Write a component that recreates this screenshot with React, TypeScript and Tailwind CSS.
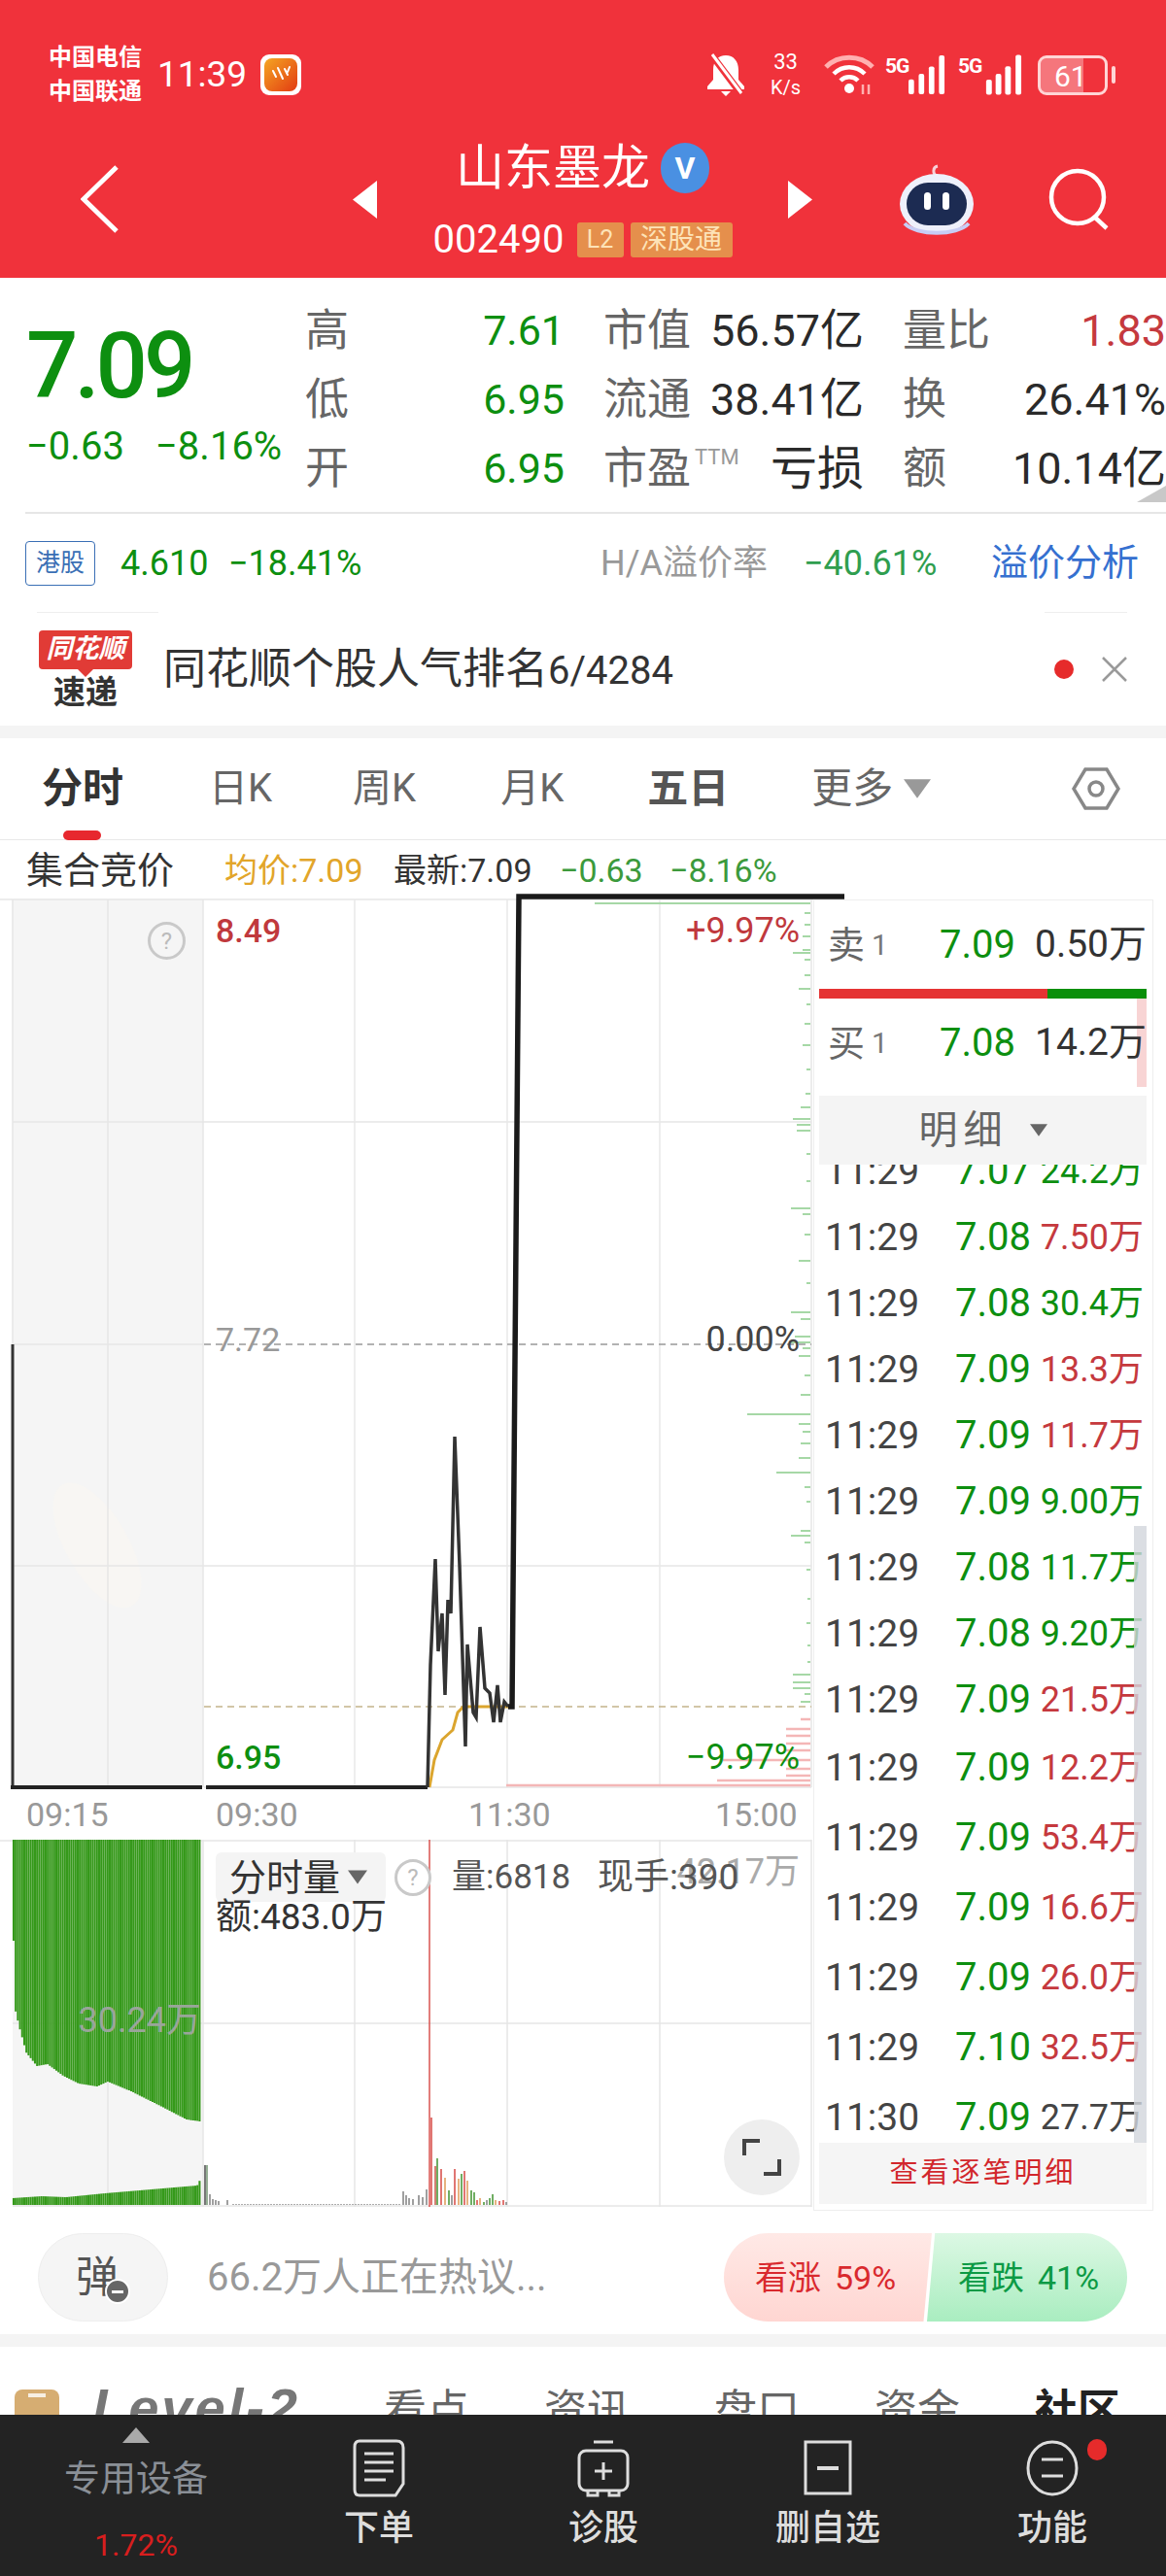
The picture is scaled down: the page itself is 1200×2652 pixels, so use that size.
import React from "react"

const SANS = "[font-family:Roboto,'Noto_Sans_CJK_SC',sans-serif]"

const trades: [string, string, string, string][] = [
  ["11:29", "7.07", "24.2万", "g"],
  ["11:29", "7.08", "7.50万", "r"],
  ["11:29", "7.08", "30.4万", "g"],
  ["11:29", "7.09", "13.3万", "r"],
  ["11:29", "7.09", "11.7万", "r"],
  ["11:29", "7.09", "9.00万", "g"],
  ["11:29", "7.08", "11.7万", "g"],
  ["11:29", "7.08", "9.20万", "g"],
  ["11:29", "7.09", "21.5万", "r"],
  ["11:29", "7.09", "12.2万", "r"],
  ["11:29", "7.09", "53.4万", "r"],
  ["11:29", "7.09", "16.6万", "r"],
  ["11:29", "7.09", "26.0万", "r"],
  ["11:29", "7.10", "32.5万", "r"],
  ["11:30", "7.09", "27.7万", "d"],
]

const pricePts =
  "440,914 443,788 448,679 451,774 455,735 458,819 461,721 464,735 468,553 473,686 479,872 481,767 487,837 490,842 494,749 499,812 504,817 508,847 512,809 515,847 519,826 523,831"
const avgPts = "442,914 447,886 455,865 466,855 471,837 477,831 523,831"

const greenTicks = [
  [4, 222], [14, 6], [26, 6], [38, 8], [52, 8], [55, 18], [62, 6], [78, 6], [92, 12], [108, 4], [128, 6], [150, 8], [175, 4],
  [200, 5], [214, 10], [226, 18], [232, 14], [238, 14], [262, 4], [290, 4], [318, 20], [324, 8], [345, 6], [372, 12], [395, 4],
  [425, 20], [432, 10], [450, 16], [456, 22], [462, 8], [470, 12], [490, 6], [510, 10], [530, 65], [540, 12], [548, 8], [560, 10],
  [575, 12], [590, 35], [605, 6], [620, 4], [650, 10], [655, 20], [662, 6], [690, 4], [720, 3], [745, 4], [768, 3], [785, 3],
  [798, 18], [806, 18], [812, 18], [818, 6], [826, 10],
]
const pinkTicks = [[844, 10], [854, 25], [861, 25], [869, 25], [876, 25], [886, 90], [895, 25], [902, 25], [907, 96], [912, 313]]

// depth of the left auction bars, read off the reference
const topCurve = [[13, 68], [16, 176], [20, 193], [27, 219], [38, 233], [49, 231], [65, 243], [81, 251], [100, 254], [111, 249], [135, 259], [163, 273], [192, 288], [206, 290]]
const lowCurve = [[13, 369], [43, 367], [68, 368], [108, 364], [203, 356], [206, 350]]

const lerp = (c: number[][], x: number) => {
  for (let i = 1; i < c.length; i++) {
    if (x <= c[i][0]) {
      const t = (x - c[i - 1][0]) / (c[i][0] - c[i - 1][0])
      return c[i - 1][1] + t * (c[i][1] - c[i - 1][1])
    }
  }
  return c[c.length - 1][1]
}

const auctionX: number[] = []
for (let x = 14; x < 207; x += 2.2) auctionX.push(x)

const volBars: [number, number, string][] = [
  [211, 335, "#555"], [213, 335, "#7a9a7a"], [216, 365, "#888"], [219, 370, "#888"], [222, 371, "#888"], [225, 372, "#888"], [234, 371, "#888"],
  [415, 362, "#888"], [418, 366, "#888"], [421, 369, "#888"], [425, 370, "#888"], [431, 366, "#888"], [435, 368, "#888"], [439, 360, "#888"],
  [444, 286, "#d9534f"], [448, 336, "#c9604f"], [450, 328, "#4c9a3c"], [454, 339, "#d9534f"], [458, 348, "#e0a060"], [462, 361, "#4c9a3c"], [465, 366, "#888"],
  [468, 339, "#d9534f"], [472, 349, "#e0a060"], [475, 344, "#4c9a3c"], [478, 341, "#d9534f"], [481, 351, "#e0a060"], [485, 361, "#4c9a3c"], [488, 363, "#4c9a3c"],
  [491, 371, "#d9534f"], [494, 369, "#e0a060"], [498, 373, "#4c9a3c"], [501, 371, "#888"], [504, 369, "#4c9a3c"], [507, 365, "#4c9a3c"], [510, 371, "#e0a060"], [514, 372, "#d9534f"], [518, 371, "#d9534f"], [521, 373, "#888"],
]
for (let x = 240; x < 414; x += 3) volBars.push([x, 375, "#999"])

const V_LINES = [365, 522, 679]

const Tri = ({ dir, className }: { dir: "left" | "right"; className: string }) => (
  <svg viewBox="0 0 25 39" className={className} fill="#fff">
    <path d={dir === "left" ? "M25 0V39L0 19.5Z" : "M0 0V39L25 19.5Z"} />
  </svg>
)

const Down = ({ className, color }: { className: string; color: string }) => (
  <svg viewBox="0 0 20 14" className={className} fill={color}>
    <path d="M0 0H20L10 14Z" />
  </svg>
)

const Help = ({ className }: { className: string }) => (
  <div className={`flex items-center justify-center rounded-full border-[3px] border-[#c9c9c9] text-[#bbb] text-[24px] ${className}`}>?</div>
)

const StatusBar = () => (
  <div className="flex h-[58px] mt-[48px] items-center">
    <div className="ml-[50px] w-[104px] flex flex-col text-white text-[24px] font-bold leading-[35px] whitespace-nowrap">
      <span>中国电信</span>
      <span>中国联通</span>
    </div>
    <span className="ml-[8px] text-white text-[37px] w-[106px]">11:39</span>
    <svg viewBox="0 0 42 42" className="w-[42px] h-[42px]">
      <defs>
        <linearGradient id="app" x1="0" y1="0" x2="1" y2="1">
          <stop offset="0" stopColor="#f5a623" />
          <stop offset="1" stopColor="#e23b12" />
        </linearGradient>
      </defs>
      <rect width="42" height="42" rx="9" fill="#fff" />
      <rect x="4" y="4" width="34" height="34" rx="8" fill="url(#app)" />
      <path d="M13 17l3 6M18 14l5 11M25 15l3 6M30 13l-2 5" stroke="#fff" strokeWidth="2" strokeLinecap="round" />
    </svg>
    <svg viewBox="0 0 40 46" className="ml-[417px] w-[40px] h-[46px]" fill="#fff">
      <path d="M20 3c-8 0-13 6-13 15v10l-6 7v3h38v-3l-6-7V18C33 9 28 3 20 3ZM15 40h10l-5 5Z" />
      <path d="M5 2 35 42" stroke="#f0323b" strokeWidth="7" />
      <path d="M6 2 36 42" stroke="#fff" strokeWidth="3" />
    </svg>
    <div className="ml-[25px] w-[33px] flex flex-col items-center text-white leading-[26px]">
      <span className="text-[22px]">33</span>
      <span className="text-[20px]">K/s</span>
    </div>
    <svg viewBox="0 0 54 44" className="ml-[22px] w-[54px] h-[44px]" fill="none">
      <path d="M3 14C16 1 38 1 51 14" stroke="#ffb0b0" strokeWidth="5" />
      <path d="M11 21C20 12 34 12 43 21" stroke="#fff" strokeWidth="4.5" />
      <path d="M18 28C23 23 31 23 36 28" stroke="#fff" strokeWidth="4.5" />
      <circle cx="27" cy="36" r="5" fill="#fff" />
      <path d="M41 32v10M47 32v10" stroke="#ffb0b0" strokeWidth="2.5" />
    </svg>
    <div className="ml-[10px] flex h-[42px]">
      <span className="text-white text-[21px] font-bold leading-[24px] tracking-[-1px] w-[24px]">5G</span>
      <svg viewBox="0 0 40 42" className="w-[38px] h-[42px]" fill="#fff">
        <rect x="0" y="26" width="6" height="16" rx="2" />
        <rect x="11" y="20" width="6" height="22" rx="2" />
        <rect x="22" y="12" width="6" height="30" rx="2" />
        <rect x="33" y="0" width="6" height="42" rx="2" />
      </svg>
    </div>
    <div className="ml-[13px] flex h-[42px]">
      <span className="text-white text-[21px] font-bold leading-[24px] tracking-[-1px] w-[24px]">5G</span>
      <svg viewBox="0 0 44 42" className="w-[43px] h-[42px]" fill="#fff">
        <rect x="5" y="26" width="6" height="16" rx="2" />
        <rect x="15" y="20" width="6" height="22" rx="2" />
        <rect x="25" y="12" width="6" height="30" rx="2" />
        <rect x="36" y="0" width="6" height="42" rx="2" />
      </svg>
    </div>
    <div className="ml-[15px] relative flex h-[41px] w-[72px] rounded-[9px] border-[3px] border-[#ffd5d5] overflow-hidden">
      <div className="w-[44px] bg-[#ffffff55]" />
      <span className="absolute left-[14px] top-[-2px] text-white text-[30px] leading-[41px]">61</span>
    </div>
    <div className="ml-[4px] w-[4px] h-[18px] rounded-full bg-[#ffd5d5]" />
  </div>
)

const Robot = () => (
  <svg viewBox="0 0 78 74" className="w-[78px] h-[74px]">
    <path d="M40 14c-6-3-5-10 0-11" stroke="#f7d0d8" strokeWidth="3" fill="none" />
    <ellipse cx="39" cy="42" rx="38" ry="31" fill="#eef0fb" />
    <rect x="8" y="20" width="62" height="44" rx="22" fill="#1c2b52" />
    <rect x="26" y="30" width="7" height="18" rx="3.5" fill="#fff" />
    <rect x="45" y="30" width="7" height="18" rx="3.5" fill="#fff" />
    <path d="M6 62c12 13 54 13 66 0" stroke="#c7cdf5" strokeWidth="4" fill="none" />
  </svg>
)

const NavBar = () => (
  <div className="flex mt-[37px] h-[124px] items-center">
    <svg viewBox="0 0 39 70" className="ml-[83px] w-[39px] h-[70px]" fill="none">
      <path d="M37 2 3 35l34 33" stroke="#fff" strokeWidth="5" />
    </svg>
    <Tri dir="left" className="ml-[241px] w-[25px] h-[39px]" />
    <div className="w-[423px] flex flex-col items-center">
      <div className="flex h-[60px] items-center">
        <span className="text-white text-[50px] leading-none whitespace-nowrap">山东墨龙</span>
        <div className="ml-[11px] w-[50px] h-[52px] rounded-full bg-[#4a90e2] flex items-center justify-center text-white font-bold text-[32px]">V</div>
      </div>
      <div className="flex h-[40px] mt-[24px] items-center">
        <span className="text-[#fff] text-[40px] leading-none w-[148px]">002490</span>
        <span className="h-[36px] w-[48px] rounded-[3px] bg-[#e58f4c] text-[#fde3b8] text-[25px] flex items-center justify-center">L2</span>
        <span className="ml-[7px] h-[36px] w-[105px] rounded-[3px] bg-[#e58f4c] text-[#fde3b8] text-[28px] flex items-center justify-center whitespace-nowrap">深股通</span>
      </div>
    </div>
    <Tri dir="right" className="w-[25px] h-[39px]" />
    <div className="ml-[89px]">
      <Robot />
    </div>
    <svg viewBox="0 0 64 64" className="ml-[75px] w-[64px] h-[64px]" fill="none" stroke="#fff" strokeWidth="4.5">
      <circle cx="31" cy="30" r="27" />
      <path d="M48 50l13 12" />
    </svg>
  </div>
)

const StatCell = ({ label, value, color, size, extra }: { label: string; value: string; color: string; size: string; extra?: boolean }) => (
  <div className="flex items-center justify-between whitespace-nowrap">
    <span className="-ml-[6px] text-[45px] text-[#666] leading-none flex items-start">
      {label}
      {extra && <span className="ml-[4px] text-[22px] text-[#999] leading-none">TTM</span>}
    </span>
    <span className={`leading-none ${size} ${color}`}>{value}</span>
  </div>
)

const InfoPanel = () => {
  const g = "text-[#0d8f10]"
  const d = "text-[#2a2a2a]"
  const sm = "text-[43px]"
  const lg = "text-[45px]"
  return (
    <div className="bg-white h-[461px]">
      <div className="flex h-[241px] relative">
        <div className="w-[320px] pl-[27px]">
          <div className="mt-[41px] h-[100px] flex items-center text-[94px] text-[#0d8f10] font-medium leading-none tracking-[-4px]">7.09</div>
          <div className="mt-[10px] h-[46px] flex items-center text-[40px] text-[#0d8f10] leading-none whitespace-nowrap">
            <span className="w-[133px]">−0.63</span>
            <span>−8.16%</span>
          </div>
        </div>
        <div className="mt-[19px] w-[880px] grid grid-cols-[261px_262px_265px] auto-rows-[71px] [column-gap:46px]">
          <StatCell label="高" value="7.61" color={g} size={sm} />
          <StatCell label="市值" value="56.57亿" color={d} size={lg} />
          <StatCell label="量比" value="1.83" color="text-[#c5393e]" size={lg} />
          <StatCell label="低" value="6.95" color={g} size={sm} />
          <StatCell label="流通" value="38.41亿" color={d} size={lg} />
          <StatCell label="换" value="26.41%" color={d} size={lg} />
          <StatCell label="开" value="6.95" color={g} size={sm} />
          <StatCell label="市盈" value="亏损" color={d} size="text-[48px]" extra />
          <StatCell label="额" value="10.14亿" color={d} size={lg} />
        </div>
        <svg viewBox="0 0 30 17" className="absolute right-0 bottom-[10px] w-[30px] h-[17px]" fill="#c8c8c8">
          <path d="M30 0V17H0Z" />
        </svg>
      </div>
      <div className="ml-[26px] h-[103px] border-t-2 border-[#e6e6e6] flex items-center whitespace-nowrap">
        <span className="w-[72px] h-[46px] rounded-[4px] border border-[#3a6fb5] text-[#3a6fb5] text-[25px] flex items-center justify-center">港股</span>
        <span className="ml-[26px] w-[111px] text-[36px] text-[#0d8f10]">4.610</span>
        <span className="w-[383px] text-[36px] text-[#0d8f10]">−18.41%</span>
        <span className="w-[209px] text-[36px] text-[#999]">H/A溢价率</span>
        <span className="w-[193px] text-[36px] text-[#2f9e4f]">−40.61%</span>
        <span className="text-[38px] text-[#3570d0]">溢价分析</span>
      </div>
      <div className="flex items-center h-[117px] relative whitespace-nowrap">
        <div className="absolute top-0 left-[38px] w-[125px] h-px bg-[#eee]" />
        <div className="absolute top-0 left-[1075px] w-[85px] h-px bg-[#eee]" />
        <div className="ml-[40px] w-[96px] flex flex-col items-center">
          <div className="w-[96px] h-[40px] rounded-[4px] bg-[#e13b36] text-white text-[27px] font-bold italic flex items-center justify-center leading-none">同花顺</div>
          <svg viewBox="0 0 16 8" className="w-[16px] h-[8px]" fill="#e13b36">
            <path d="M0 0H16L8 8Z" />
          </svg>
          <span className="text-[33px] font-bold leading-[32px] text-[#333]">速递</span>
        </div>
        <span className="ml-[32px] w-[917px] text-[#333] text-[44px] leading-none">
          同花顺个股人气排名<span className="text-[40px]">6/4284</span>
        </span>
        <div className="w-[20px] h-[20px] rounded-full bg-[#e62b2b]" />
        <svg viewBox="0 0 26 26" className="ml-[29px] w-[26px] h-[26px]" fill="none" stroke="#9a9a9a" strokeWidth="2.5">
          <path d="M1 1 25 25M25 1 1 25" />
        </svg>
      </div>
    </div>
  )
}

const TabBar = () => (
  <div className="h-[105px] bg-white border-b border-[#e8e8e8] flex items-center whitespace-nowrap text-[42px] text-[#666] leading-none">
    <div className="ml-[43px] relative font-bold text-[#333] w-[86px]">
      分时
      <div className="absolute left-[22px] top-[64px] w-[39px] h-[10px] rounded-full bg-[#e7282e]" />
    </div>
    <span className="ml-[86px] text-[40px]">日K</span>
    <span className="ml-[83px] text-[40px]">周K</span>
    <span className="ml-[87px] text-[40px]">月K</span>
    <span className="ml-[86px] font-bold text-[#555] text-[42px]">五日</span>
    <span className="ml-[85px] text-[42px]">更多</span>
    <Down className="ml-[11px] w-[28px] h-[20px]" color="#999" />
    <svg viewBox="0 0 50 44" className="ml-[145px] w-[50px] h-[44px]" fill="none" stroke="#888" strokeWidth="3.5">
      <path d="M14 2H36L48 22 36 42H14L2 22Z" />
      <circle cx="25" cy="22" r="7" />
    </svg>
  </div>
)

const AuxRow = () => (
  <div className="h-[61px] bg-white flex items-center whitespace-nowrap text-[34px] leading-none">
    <span className="ml-[27px] w-[204px] text-[38px] text-[#333]">集合竞价</span>
    <span className="w-[174px] text-[#e2a52a]">均价:7.09</span>
    <span className="w-[171px] text-[#333]">最新:7.09</span>
    <span className="w-[113px] text-[#3c9a3c]">−0.63</span>
    <span className="text-[#3c9a3c]">−8.16%</span>
  </div>
)

const PriceChart = () => (
  <div className="relative h-[916px]">
    <svg viewBox="0 0 837 916" className="absolute inset-0 w-[837px] h-[916px] overflow-visible" fill="none">
      <rect x="13" y="0" width="196" height="914" fill="#f5f5f5" />
      <ellipse cx="100" cy="665" rx="32" ry="72" transform="rotate(-30 100 665)" fill="#f8f6f3" />
      <path d="M0 0H837M13 229H835M13 686H835M210 914H835M13 0V914M111 0V914M209 0V914M835 0V914" stroke="#e6e6e6" strokeWidth="1.5" />
      {V_LINES.map((x) => (
        <line key={x} x1={x} y1="0" x2={x} y2="914" stroke="#e8e8e8" strokeWidth="1.5" />
      ))}
      <line x1="13" y1="458" x2="209" y2="458" stroke="#e6e6e6" strokeWidth="1.5" />
      <line x1="210" y1="458" x2="835" y2="458" stroke="#999" strokeWidth="1.5" strokeDasharray="7 5" />
      <line x1="210" y1="831" x2="835" y2="831" stroke="#c4b48a" strokeWidth="1.5" strokeDasharray="7 5" />
      {greenTicks.map(([y, len], i) => (
        <line key={i} x1={834 - len} y1={y} x2="834" y2={y} stroke="#a6d8a6" strokeWidth="2" />
      ))}
      {pinkTicks.map(([y, len], i) => (
        <line key={i} x1={834 - len} y1={y} x2="834" y2={y} stroke="#f4b6b6" strokeWidth="2.5" />
      ))}
      <path d="M13 458V914" stroke="#333" strokeWidth="3" />
      <path d="M11 914H208M212 914H440" stroke="#222" strokeWidth="4" />
      <polyline points={avgPts} stroke="#dba52e" strokeWidth="3" />
      <polyline points={pricePts} stroke="#333" strokeWidth="3.5" />
      <path d="M523 831H527L534 -3H869" stroke="#1a1a1a" strokeWidth="5.5" />
    </svg>
    <span className="absolute left-[222px] top-[14px] text-[34px] leading-[36px] font-medium text-[#c0393d]">8.49</span>
    <span className="absolute right-[14px] top-[14px] text-[36px] leading-[36px] text-[#c0393d]">+9.97%</span>
    <span className="absolute left-[222px] top-[435px] text-[34px] leading-[36px] text-[#999]">7.72</span>
    <span className="absolute right-[14px] top-[435px] text-[36px] leading-[36px] text-[#444]">0.00%</span>
    <span className="absolute left-[222px] top-[865px] text-[34px] leading-[36px] font-medium text-[#0d8f10]">6.95</span>
    <span className="absolute right-[14px] top-[865px] text-[36px] leading-[36px] text-[#0d8f10]">−9.97%</span>
    <Help className="absolute left-[152px] top-[23px] w-[39px] h-[39px]" />
  </div>
)

const TimeRow = () => (
  <div className="h-[52px] flex items-center text-[34px] text-[#999] leading-none whitespace-nowrap">
    <span className="ml-[27px] w-[195px]">09:15</span>
    <span className="w-[260px]">09:30</span>
    <span className="w-[254px]">11:30</span>
    <span>15:00</span>
  </div>
)

const VolumeChart = () => (
  <div className="relative h-[378px]">
    <svg viewBox="0 0 837 378" className="absolute inset-0 w-[837px] h-[378px]" fill="none">
      <rect x="13" y="0" width="196" height="378" fill="#f5f5f5" />
      <path d="M0 1H835M13 189H835M13 377H835M111 0V378M209 0V378M365 0V378M522 0V378M679 0V378M835 0V378" stroke="#e6e6e6" strokeWidth="1.5" />
      {auctionX.map((x) => (
        <g key={x} stroke="#35991a" strokeWidth="2.1">
          <line x1={x} y1="0" x2={x} y2={lerp(topCurve, x)} />
          <line x1={x} y1={lerp(lowCurve, x)} x2={x} y2="376" />
        </g>
      ))}
      <line x1="442" y1="0" x2="442" y2="378" stroke="#d9534f" strokeWidth="1.5" />
      {volBars.map(([x, y, c], i) => (
        <line key={i} x1={x} y1={y} x2={x} y2="376" stroke={c} strokeWidth="1.6" />
      ))}
    </svg>
    <span className="absolute right-[630px] top-[168px] text-[36px] leading-[36px] text-[#9aa59a] whitespace-nowrap">30.24万</span>
    <div className="absolute left-[222px] top-[13px] w-[175px] h-[51px] rounded-[6px] bg-[#f4f4f4] flex items-center whitespace-nowrap">
      <span className="ml-[14px] text-[38px] text-[#333] leading-none">分时量</span>
      <Down className="ml-[8px] w-[20px] h-[15px]" color="#666" />
    </div>
    <Help className="absolute left-[406px] top-[20px] w-[38px] h-[38px] bg-white/70" />
    <span className="absolute left-[465px] top-[21px] text-[35px] leading-[36px] text-[#555] whitespace-nowrap">量:6818</span>
    <span className="absolute right-[14px] top-[15px] text-[36px] leading-[36px] text-[#aaa] whitespace-nowrap">42.17万</span>
    <span className="absolute left-[615px] top-[21px] text-[37px] leading-[36px] text-[#555] whitespace-nowrap">现手:390</span>
    <span className="absolute left-[222px] top-[62px] text-[37px] leading-[36px] text-[#333] whitespace-nowrap">额:483.0万</span>
    <div className="absolute left-[745px] top-[288px] w-[78px] h-[78px] rounded-full bg-[#eee] flex items-center justify-center">
      <svg viewBox="0 0 40 40" className="w-[40px] h-[40px]" fill="none" stroke="#444" strokeWidth="4">
        <path d="M2 18V3H18M38 22V37H22" />
      </svg>
    </div>
  </div>
)

const colorOf: Record<string, string> = { g: "text-[#0d8f10]", r: "text-[#c5393e]", d: "text-[#444]" }

const TradeRow = ({ row, tall }: { row: [string, string, string, string]; tall: boolean }) => (
  <div className={`flex items-center leading-none whitespace-nowrap ${tall ? "h-[72px]" : "h-[68px]"}`}>
    <span className="ml-[6px] w-[134px] text-[39px] text-[#444]">{row[0]}</span>
    <span className="w-[80px] text-[40px] text-[#0d8f10]">{row[1]}</span>
    <span className={`w-[114px] text-right text-[36px] ${colorOf[row[3]]}`}>{row[2]}</span>
  </div>
)

const QuoteRow = ({ label, price, vol }: { label: string; price: string; vol: string }) => (
  <div className="flex items-center h-full whitespace-nowrap leading-none">
    <span className="ml-[9px] w-[45px] text-[38px] text-[#666]">{label}</span>
    <span className="w-[70px] text-[30px] text-[#777]">1</span>
    <span className="w-[98px] text-[40px] text-[#0d8f10]">{price}</span>
    <span className="w-[113px] text-right text-[39px] text-[#333]">{vol}</span>
  </div>
)

const SidePanel = () => (
  <div className="w-[350px] h-[1350px] border-x border-t border-b border-[#eee] pl-[5px] pr-[6px] bg-white">
    <div className="h-[91px]">
      <QuoteRow label="卖" price="7.09" vol="0.50万" />
    </div>
    <div className="flex h-[10px]">
      <div className="w-[235px] bg-[#e53333]" />
      <div className="flex-1 bg-[#0a8f0a]" />
    </div>
    <div className="relative h-[91px]">
      <div className="absolute right-0 top-0 w-[10px] h-[91px] bg-[#f8d4d4]" />
      <div className="relative h-full">
        <QuoteRow label="买" price="7.08" vol="14.2万" />
      </div>
    </div>
    <div className="mt-[9px] h-[71px] bg-[#f4f4f4] relative z-10 flex items-center justify-center whitespace-nowrap">
      <span className="text-[40px] text-[#666] leading-none tracking-[6px]">明细</span>
      <Down className="ml-[22px] w-[18px] h-[13px]" color="#666" />
    </div>
    <div className="relative h-[1007px] overflow-hidden">
      <div className="-mt-[27px]">
        {trades.map((t, i) => (
          <TradeRow key={i} row={t} tall={i >= 9} />
        ))}
      </div>
      <div className="absolute right-0 top-[372px] bottom-0 w-[13px] bg-[#d2d6dc]/80" />
    </div>
    <div className="h-[63px] bg-[#f5f5f5] flex items-center justify-center text-[#d2272c] text-[29px] tracking-[3px] whitespace-nowrap leading-none">查看逐笔明细</div>
  </div>
)

const BottomInfo = () => (
  <div className="h-[131px] bg-white pt-[27px] flex whitespace-nowrap">
    <div className="ml-[39px] relative w-[134px] h-[91px] rounded-full bg-[#f5f5f5] border border-[#eee] flex items-center justify-center text-[44px] text-[#555] leading-none">
      <span className="mr-[12px]">弹</span>
      <div className="absolute left-[68px] top-[46px] w-[26px] h-[26px] rounded-full bg-[#666] border-2 border-white flex items-center justify-center">
        <div className="w-[12px] h-[3px] bg-white" />
      </div>
    </div>
    <span className="ml-[40px] w-[532px] h-[91px] flex items-center text-[40px] text-[#999] leading-none">66.2万人正在热议...</span>
    <div className="flex w-[415px] h-[91px]">
      <div className="w-[214px] rounded-l-full bg-gradient-to-b from-[#ffe9e6] to-[#ffd6d2] [clip-path:polygon(0_0,100%_0,96%_100%,0_100%)] flex items-center pl-[32px] text-[34px] text-[#d9292e] leading-none">
        看涨<span className="ml-[14px]">59%</span>
      </div>
      <div className="-ml-[5px] flex-1 rounded-r-full bg-gradient-to-b from-[#dcf8e4] to-[#a9edc0] [clip-path:polygon(4%_0,100%_0,100%_100%,0_100%)] flex items-center pl-[32px] text-[34px] text-[#0c9a45] leading-none">
        看跌<span className="ml-[14px]">41%</span>
      </div>
    </div>
  </div>
)

const LowerTabs = () => (
  <div className="h-[70px] bg-white overflow-hidden flex items-start whitespace-nowrap text-[44px] text-[#666] leading-none">
    <div className="ml-[15px] mt-[44px] w-[46px] h-[46px] rounded-[8px] bg-[#d6ad72] flex justify-center pt-[4px]">
      <div className="w-[18px] h-[4px] bg-white/80" />
    </div>
    <span className="ml-[34px] mt-[35px] w-[300px] text-[56px] font-bold tracking-[3px] italic text-[#777] [font-family:'Liberation_Sans',sans-serif]">Level-2</span>
    <span className="mt-[44px] w-[165px]">看点</span>
    <span className="mt-[44px] w-[175px]">资讯</span>
    <span className="mt-[44px] w-[165px]">盘口</span>
    <span className="mt-[44px] w-[165px]">资金</span>
    <span className="mt-[44px] font-bold text-[#222]">社区</span>
  </div>
)

const DockIcon = ({ children }: { children: React.ReactNode }) => (
  <svg viewBox="0 0 56 60" className="w-[56px] h-[60px]" fill="none" stroke="#ddd" strokeWidth="3">
    {children}
  </svg>
)

const DockItem = ({ label, icon, className, dot }: { label: string; icon: React.ReactNode; className: string; dot?: boolean }) => (
  <div className={`${className} relative w-[80px] flex flex-col items-center`}>
    <div className="mt-[25px] h-[60px]">{icon}</div>
    <span className="mt-[14px] text-[#ddd] text-[36px] font-medium leading-none whitespace-nowrap">{label}</span>
    {dot && <div className="absolute left-[76px] top-[25px] w-[20px] h-[22px] rounded-full bg-[#e62b2b]" />}
  </div>
)

const Dock = () => (
  <div className="h-[166px] bg-[#232323] flex">
    <div className="ml-[65px] w-[150px] flex flex-col items-center shrink-0">
      <svg viewBox="0 0 28 16" className="mt-[13px] w-[28px] h-[16px]" fill="#aaa">
        <path d="M14 0 28 16H0Z" />
      </svg>
      <span className="mt-[19px] text-[37px] text-[#8a8f96] leading-none whitespace-nowrap">专用设备</span>
      <span className="mt-[33px] text-[32px] text-[#d81e1e] leading-none">1.72%</span>
    </div>
    <DockItem
      className="ml-[135px]"
      label="下单"
      icon={
        <DockIcon>
          <path d="M8 2H46Q53 2 53 9V46L45 58H8Q3 58 3 52V8Q3 2 8 2Z" />
          <path d="M13 15H43M13 24H43M13 33H43M13 42H35" />
        </DockIcon>
      }
    />
    <DockItem
      className="ml-[151px]"
      label="诊股"
      icon={
        <DockIcon>
          <path d="M18 3H38" />
          <rect x="3" y="12" width="50" height="41" rx="7" />
          <path d="M28 24V42M19 33H37" />
          <path d="M12 53V58H22V53M34 53V58H44V53" />
        </DockIcon>
      }
    />
    <DockItem
      className="ml-[151px]"
      label="删自选"
      icon={
        <DockIcon>
          <rect x="5" y="3" width="46" height="53" />
          <path d="M17 30H39" strokeWidth="4" />
        </DockIcon>
      }
    />
    <DockItem
      className="ml-[151px]"
      label="功能"
      dot
      icon={
        <DockIcon>
          <ellipse cx="28" cy="30" rx="25" ry="27" />
          <path d="M17 21H39M17 38H39" />
        </DockIcon>
      }
    />
  </div>
)

export default function App() {
  return (
    <div className={`w-[1200px] h-[2652px] overflow-hidden bg-white ${SANS}`}>
      <div className="h-[286px] bg-[#f0323b] overflow-hidden">
        <StatusBar />
        <NavBar />
      </div>
      <InfoPanel />
      <div className="h-[13px] bg-[#f4f4f4]" />
      <TabBar />
      <AuxRow />
      <div className="flex h-[1346px]">
        <div className="w-[837px] shrink-0">
          <PriceChart />
          <TimeRow />
          <VolumeChart />
        </div>
        <SidePanel />
      </div>
      <BottomInfo />
      <div className="h-[13px] bg-[#f4f4f4]" />
      <LowerTabs />
      <Dock />
    </div>
  )
}
